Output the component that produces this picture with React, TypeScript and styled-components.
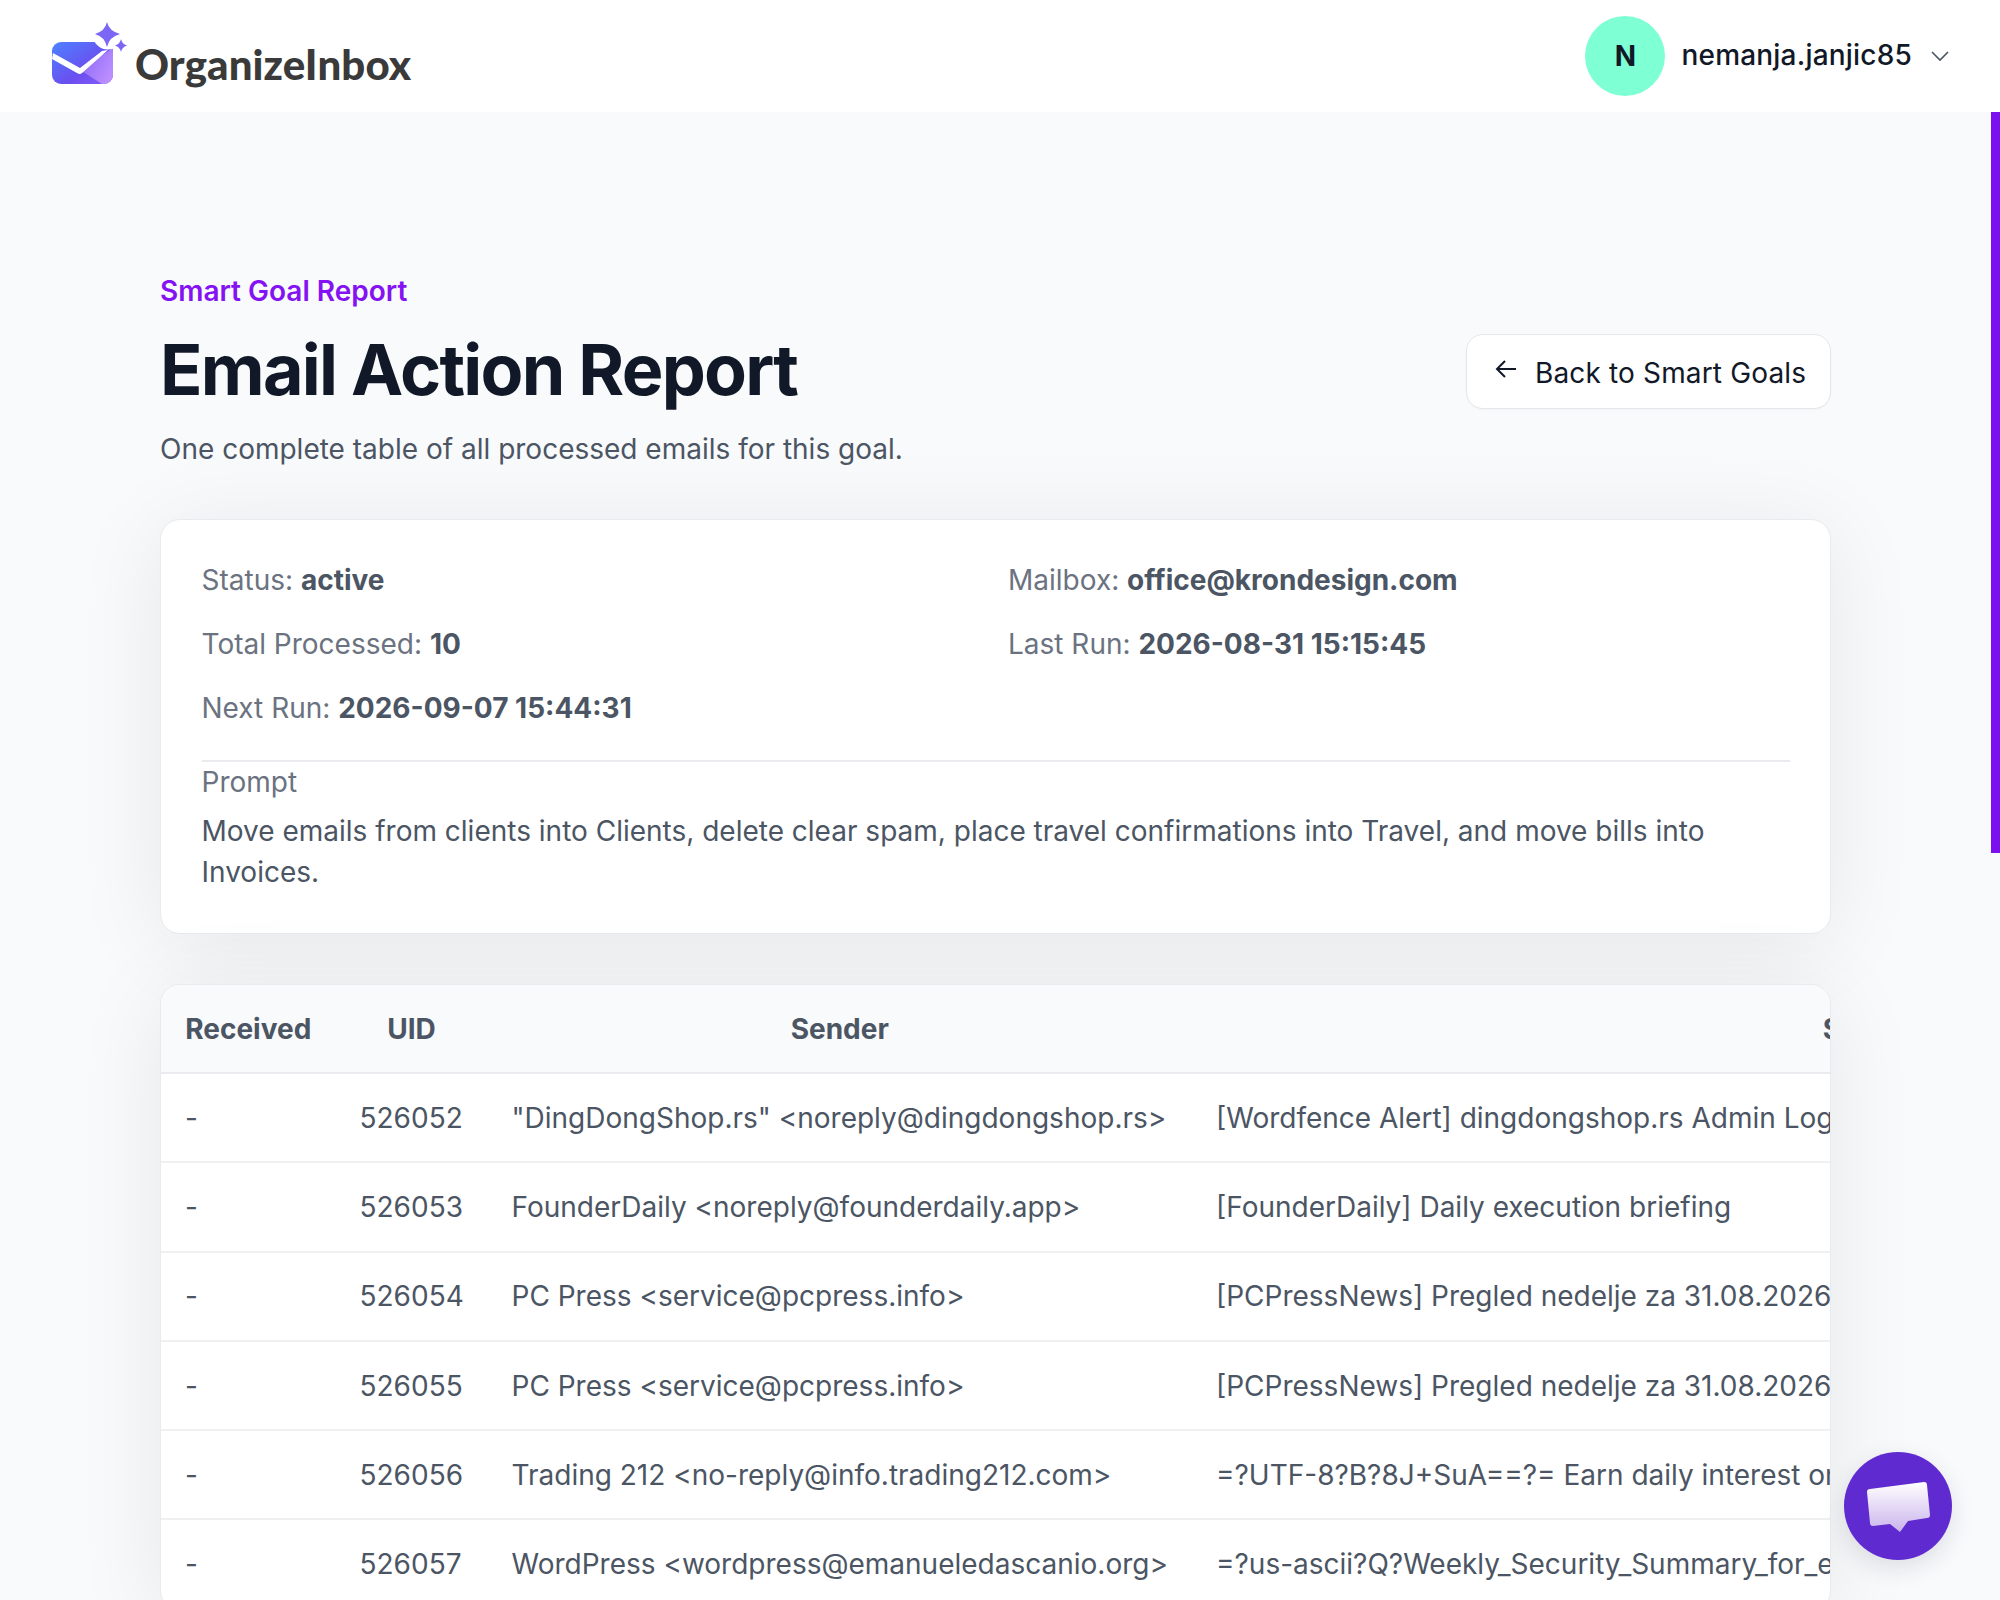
import styled, { createGlobalStyle } from "styled-components";

interface EmailRow {
  uid: string;
  sender: string;
  subject: string;
}

const rows: EmailRow[] = [
  { uid: "526052", sender: '"DingDongShop.rs" <noreply@dingdongshop.rs>', subject: "[Wordfence Alert] dingdongshop.rs Admin Login" },
  { uid: "526053", sender: "FounderDaily <noreply@founderdaily.app>", subject: "[FounderDaily] Daily execution briefing" },
  { uid: "526054", sender: "PC Press <service@pcpress.info>", subject: "[PCPressNews] Pregled nedelje za 31.08.2026" },
  { uid: "526055", sender: "PC Press <service@pcpress.info>", subject: "[PCPressNews] Pregled nedelje za 31.08.2026" },
  { uid: "526056", sender: "Trading 212 <no-reply@info.trading212.com>", subject: "=?UTF-8?B?8J+SuA==?= Earn daily interest on your cash" },
  { uid: "526057", sender: "WordPress <wordpress@emanueledascanio.org>", subject: "=?us-ascii?Q?Weekly_Security_Summary_for_emanueledascanio.org?=" },
];

const GlobalStyle = createGlobalStyle`
  html, body {
    margin: 0;
    height: 100%;
    overflow: hidden;
    background: #f9fafc;
    font-family: Inter, "Liberation Sans", sans-serif;
  }
  * {
    box-sizing: border-box;
  }
`;

const Page = styled.div`
  height: 1600px;
  overflow: hidden;
`;

const Header = styled.header`
  height: 112px;
  background: #ffffff;
  display: flex;
  align-items: center;
  justify-content: space-between;
  padding: 0 50px 0 52px;
`;

const Brand = styled.div`
  display: flex;
  align-items: flex-start;
  gap: 8px;
  height: 63px;
  margin-bottom: 6px;
`;

const BrandName = styled.span`
  font-family: Lato, sans-serif;
  font-size: 42px;
  font-weight: 900;
  letter-spacing: 0.1px;
  color: #3a3a3a;
  line-height: 40px;
  margin-top: 22px;
`;

const UserMenu = styled.div`
  display: flex;
  align-items: center;
`;

const Avatar = styled.div`
  width: 80px;
  height: 80px;
  border-radius: 50%;
  background: #7fffd4;
  color: #111827;
  font-size: 28px;
  font-weight: 700;
  display: flex;
  align-items: center;
  justify-content: center;
`;

const UserName = styled.span`
  font-size: 28px;
  font-weight: 500;
  letter-spacing: 0.2px;
  color: #111827;
  margin-left: 16px;
  margin-top: -3px;
`;

const Chevron = styled.svg`
  width: 20px;
  height: 12px;
  margin-left: 18px;
  fill: none;
  stroke: #4b5563;
  stroke-width: 1.6;
`;

const Main = styled.main`
  width: 1671px;
  margin-left: 160px;
  padding-top: 162px;
`;

const TitleRow = styled.div`
  display: flex;
  justify-content: space-between;
  align-items: flex-start;
`;

const Eyebrow = styled.div`
  font-size: 28px;
  line-height: 34px;
  font-weight: 600;
  color: #8412f2;
`;

const Title = styled.h1`
  margin: 17px 0 0;
  font-size: 70px;
  line-height: 90px;
  font-weight: 700;
  letter-spacing: -1.75px;
  color: #111827;
`;

const Subtitle = styled.p`
  margin: 14px 0 0;
  font-size: 28px;
  line-height: 40px;
  color: #4b5563;
`;

const BackButton = styled.button`
  margin-top: 60px;
  width: 365px;
  height: 75px;
  display: flex;
  align-items: center;
  gap: 18px;
  padding: 2px 0 0 28px;
  background: #ffffff;
  border: 1px solid #e5e7eb;
  border-radius: 17px;
  font-family: inherit;
  font-size: 28px;
  letter-spacing: 0.15px;
  color: #111827;
  box-shadow: 0 1px 2px rgba(0, 0, 0, 0.03);
`;

const ArrowIcon = styled.svg`
  width: 22px;
  height: 20px;
  margin-top: -7px;
  fill: none;
  stroke: #111827;
  stroke-width: 2;
`;

const Card = styled.section`
  background: #ffffff;
  border: 1px solid #e8eaed;
  border-radius: 20px;
  box-shadow: 0 10px 90px rgba(0, 0, 0, 0.08);
`;

const SummaryCard = styled(Card)`
  margin-top: 50px;
  height: 415px;
  padding: 28px 40.5px 0;
`;

const SummaryGrid = styled.div`
  display: grid;
  grid-template-columns: 1fr 1fr;
  column-gap: 25px;
  grid-auto-rows: 64px;
  align-items: center;
  font-size: 28px;
  color: #6b7280;
`;

const Strong = styled.strong`
  font-weight: 700;
  color: #4b5563;
`;

const PromptBlock = styled.div`
  margin-top: 20px;
  border-top: 2px solid #e9ebee;
  font-size: 28px;
  line-height: 41px;
`;

const PromptLabel = styled.div`
  color: #6b7280;
  margin-bottom: 8px;
`;

const PromptText = styled.div`
  color: #4b5563;
`;

const TableCard = styled(Card)`
  margin-top: 50px;
  overflow: hidden;
`;

const Table = styled.table`
  border-collapse: collapse;
  table-layout: fixed;
  width: 3200px;
`;

const HeadCell = styled.th<{ $width: number }>`
  width: ${({ $width }) => $width}px;
  height: 88px;
  padding: 0 24px;
  background: #f9fafc;
  border-bottom: 2px solid #e9ebee;
  font-size: 28px;
  font-weight: 700;
  color: #4b5563;
  white-space: nowrap;
  text-align: center;
`;

const Cell = styled.td`
  height: 89.3px;
  padding: 0 24px;
  border-bottom: 2px solid #eff0f2;
  font-size: 28px;
  color: #4b5563;
  white-space: nowrap;
  overflow: hidden;
`;

const ScrollThumb = styled.div`
  position: fixed;
  top: 112px;
  right: 0;
  width: 9px;
  height: 741px;
  background: #7c0ff0;
`;

const ChatButton = styled.button`
  position: fixed;
  left: 1844px;
  top: 1452px;
  width: 108px;
  height: 108px;
  padding: 0;
  border: none;
  border-radius: 50%;
  background: #5f2bd0;
  box-shadow: 0 8px 24px rgba(17, 24, 39, 0.12);
`;

const App = () => (
  <Page>
    <GlobalStyle />
    <Header>
      <Brand>
        <svg width="75" height="63" viewBox="0 0 75 63">
          <defs>
            <linearGradient id="env" x1="0" y1="0" x2="1" y2="1">
              <stop offset="0" stopColor="#4d82ff" />
              <stop offset="0.6" stopColor="#6a4ff0" />
              <stop offset="1" stopColor="#8a5cf5" />
            </linearGradient>
            <linearGradient id="facet" x1="0" y1="0" x2="1" y2="0.6">
              <stop offset="0" stopColor="#8465f5" />
              <stop offset="1" stopColor="#bb8dff" />
            </linearGradient>
            <clipPath id="envClip">
              <rect x="0" y="20" width="61" height="42" rx="9" />
            </clipPath>
          </defs>
          <g clipPath="url(#envClip)">
            <rect x="0" y="20" width="61" height="42" fill="url(#env)" />
            <path d="M28 48 L61 26 V62 H50 Z" fill="url(#facet)" />
          </g>
          <circle cx="56" cy="12" r="15.5" fill="#fff" />
          <path d="M1 31 L28 46 L50 29 L56 28 L30 51 Q28 53 25 51 L0 37 Z" fill="#fff" />
          <path d="M55 0 Q57 9 68 12 Q57 15 55 25 Q53 15 43 12 Q53 9 55 0 Z" fill="#7c66f5" />
          <path d="M69 17 Q70 22 75 23.5 Q70 25 69 30 Q68 25 63 23.5 Q68 22 69 17 Z" fill="#7c66f5" />
        </svg>
        <BrandName>OrganizeInbox</BrandName>
      </Brand>
      <UserMenu>
        <Avatar>N</Avatar>
        <UserName>nemanja.janjic85</UserName>
        <Chevron viewBox="0 0 20 12">
          <path d="M2 2 L10 10 L18 2" />
        </Chevron>
      </UserMenu>
    </Header>
    <Main>
      <TitleRow>
        <div>
          <Eyebrow>Smart Goal Report</Eyebrow>
          <Title>Email Action Report</Title>
          <Subtitle>One complete table of all processed emails for this goal.</Subtitle>
        </div>
        <BackButton>
          <ArrowIcon viewBox="0 0 22 20">
            <path d="M21 10 H2 M10 2 L2 10 L10 18" />
          </ArrowIcon>
          Back to Smart Goals
        </BackButton>
      </TitleRow>
      <SummaryCard>
        <SummaryGrid>
          <div>Status: <Strong>active</Strong></div>
          <div>Mailbox: <Strong>office@krondesign.com</Strong></div>
          <div>Total Processed: <Strong>10</Strong></div>
          <div>Last Run: <Strong>2026-08-31 15:15:45</Strong></div>
          <div>Next Run: <Strong>2026-09-07 15:44:31</Strong></div>
        </SummaryGrid>
        <PromptBlock>
          <PromptLabel>Prompt</PromptLabel>
          <PromptText>
            Move emails from clients into Clients, delete clear spam, place travel confirmations into Travel, and move bills into Invoices.
          </PromptText>
        </PromptBlock>
      </SummaryCard>
      <TableCard>
        <Table>
          <thead>
            <tr>
              <HeadCell $width={174.5}>Received</HeadCell>
              <HeadCell $width={152}>UID</HeadCell>
              <HeadCell $width={704.5}>Sender</HeadCell>
              <HeadCell $width={1366}>Subject</HeadCell>
              <HeadCell $width={803}>Action</HeadCell>
            </tr>
          </thead>
          <tbody>
            {rows.map((row) => (
              <tr key={row.uid}>
                <Cell>-</Cell>
                <Cell>{row.uid}</Cell>
                <Cell>{row.sender}</Cell>
                <Cell>{row.subject}</Cell>
                <Cell />
              </tr>
            ))}
          </tbody>
        </Table>
      </TableCard>
    </Main>
    <ScrollThumb />
    <ChatButton aria-label="Open chat">
      <svg width="108" height="108" viewBox="0 0 108 108">
        <defs>
          <linearGradient id="bubble" x1="0" y1="0" x2="0" y2="1">
            <stop offset="0" stopColor="#ffffff" />
            <stop offset="1" stopColor="#c9b3ec" />
          </linearGradient>
        </defs>
        <path
          d="M26 37 L80 30 Q83 30 83 33 L86 63 Q86 66 83 66 L64 69 L56 80 L46 72 L29 74 Q26 74 26 71 L23 40 Q23 37 26 37 Z"
          fill="url(#bubble)"
        />
      </svg>
    </ChatButton>
  </Page>
);

export default App;
